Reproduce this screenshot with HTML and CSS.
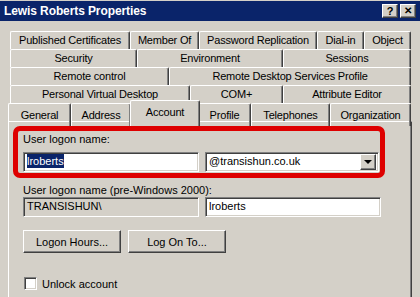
FILE: index.html
```html
<!DOCTYPE html>
<html lang="en">
<head>
    <meta charset="UTF-8">
    <title>Lewis Roberts Properties</title>
    <link rel="stylesheet" href="styles.css">
</head>
<body>
    <div class="window">
        <div class="titlebar">
            <span class="title">Lewis Roberts Properties</span>
            <div class="caption-buttons">
                <span class="cap-btn">?</span>
                <span class="cap-btn close">&#x2715;</span>
            </div>
        </div>

        <div class="tabs">
            <div class="tab-row row1">
                <span class="tab">Published Certificates</span>
                <span class="tab">Member Of</span>
                <span class="tab">Password Replication</span>
                <span class="tab">Dial-in</span>
                <span class="tab">Object</span>
            </div>
            <div class="tab-row row2">
                <span class="tab">Security</span>
                <span class="tab">Environment</span>
                <span class="tab">Sessions</span>
            </div>
            <div class="tab-row row3">
                <span class="tab">Remote control</span>
                <span class="tab">Remote Desktop Services Profile</span>
            </div>
            <div class="tab-row row4">
                <span class="tab">Personal Virtual Desktop</span>
                <span class="tab">COM+</span>
                <span class="tab">Attribute Editor</span>
            </div>
            <div class="tab-row row5">
                <span class="tab">General</span>
                <span class="tab">Address</span>
                <span class="tab active">Account</span>
                <span class="tab">Profile</span>
                <span class="tab">Telephones</span>
                <span class="tab">Organization</span>
            </div>
        </div>

        <div class="panel">
            <div class="highlight">
                <div class="label">User logon name:</div>
                <div class="field-row">
                    <div class="textbox wide"><span class="selected">lroberts</span></div>
                    <div class="textbox combo">
                        <span>@transishun.co.uk</span>
                        <span class="drop-btn"><span class="arrow"></span></span>
                    </div>
                </div>
            </div>

            <div class="fields">
                <div class="label">User logon name (pre-Windows 2000):</div>
                <div class="field-row">
                    <div class="textbox wide disabled">TRANSISHUN\</div>
                    <div class="textbox short">lroberts</div>
                </div>

                <div class="button-row">
                    <span class="button">Logon Hours...</span>
                    <span class="button">Log On To...</span>
                </div>

                <label class="check">
                    <span class="checkbox"></span>
                    Unlock account
                </label>
            </div>
        </div>
    </div>
</body>
</html>
```

FILE: styles.css
```css
body {
    margin: 0;
    background: #d4d0c8;
    font-family: "Liberation Sans", Arial, sans-serif;
    font-size: 11px;
    color: #000;
    overflow: hidden;
}
.window {
    width: 420px;
    height: 297px;
    padding-top: 1px;
    box-sizing: border-box;
}
.titlebar {
    height: 20px;
    background: #0a246a;
    display: flex;
    align-items: center;
    justify-content: space-between;
    padding: 0 4px 0 4px;
}
.title {
    color: #fff;
    font-weight: bold;
    font-size: 12px;
    letter-spacing: -0.1px;
}
.caption-buttons {
    display: flex;
    gap: 2px;
}
.cap-btn {
    width: 14px;
    height: 12px;
    background: #d4d0c8;
    border-top: 1px solid #fff;
    border-left: 1px solid #fff;
    border-right: 1px solid #404040;
    border-bottom: 1px solid #404040;
    box-shadow: inset -1px -1px 0 #808080;
    font-weight: bold;
    font-size: 11px;
    line-height: 12px;
    text-align: center;
}
.cap-btn.close {
    font-size: 10px;
}
.tabs {
    margin-top: 10px;
    padding-left: 10px;
    width: 401px;
}
.tab-row {
    display: grid;
    height: 18px;
}
.row1 { grid-template-columns: 120px 69px 118px 47px 47px; }
.row2 { grid-template-columns: 127px 146px 128px; }
.row3 { grid-template-columns: 159px 242px; }
.row4 { grid-template-columns: 180px 93px 128px; }
.row5 {
    margin-left: -2px;
    grid-template-columns: 63px 60px 67px 53px 79px 81px;
    position: relative;
}
.tab {
    display: flex;
    align-items: center;
    justify-content: center;
    border-top: 1px solid #fff;
    border-left: 1px solid #fff;
    border-right: 1px solid #404040;
    box-shadow: inset -1px 0 0 #808080;
    border-top-left-radius: 2px;
    border-top-right-radius: 2px;
    white-space: nowrap;
    letter-spacing: -0.2px;
    padding-bottom: 1px;
}
.tab.active {
    margin: -3px -2px 0 -1px;
    padding-bottom: 4px;
    background: #d4d0c8;
    position: relative;
    z-index: 1;
    height: 21px;
}
.panel {
    margin-left: 8px;
    width: 404px;
    height: 180px;
    border-top: 1px solid #fff;
    border-left: 1px solid #fff;
    border-right: 1px solid #404040;
    box-shadow: inset -1px 0 0 #808080;
    padding: 4px 0 0 4px;
    box-sizing: border-box;
}
.highlight {
    width: 372px;
    height: 52px;
    box-sizing: border-box;
    border: 5px solid #de0000;
    border-radius: 7px;
    padding: 2px 0 0 5px;
}
.label {
    height: 13px;
    line-height: 13px;
}
.field-row {
    display: flex;
    gap: 6px;
    margin-top: 6px;
}
.textbox {
    height: 20px;
    box-sizing: border-box;
    background: #fff;
    border-top: 1px solid #808080;
    border-left: 1px solid #808080;
    border-right: 1px solid #fff;
    border-bottom: 1px solid #fff;
    box-shadow: inset 1px 1px 0 #404040, inset -1px -1px 0 #d4d0c8;
    padding: 0 3px;
    line-height: 17px;
    white-space: nowrap;
}
.textbox.wide { width: 176px; }
.textbox.short { width: 176px; }
.textbox.combo {
    width: 174px;
    display: flex;
    justify-content: space-between;
    padding-right: 2px;
}
.textbox.disabled {
    background: #d4d0c8;
}
.selected {
    background: #0a246a;
    color: #fff;
    padding: 1px 0;
}
.drop-btn {
    margin-top: 1px;
    width: 14px;
    height: 14px;
    background: #d4d0c8;
    border-top: 1px solid #fff;
    border-left: 1px solid #fff;
    border-right: 1px solid #404040;
    border-bottom: 1px solid #404040;
    box-shadow: inset -1px -1px 0 #808080;
    display: flex;
    align-items: center;
    justify-content: center;
}
.arrow {
    width: 0;
    height: 0;
    border-left: 4px solid transparent;
    border-right: 4px solid transparent;
    border-top: 4px solid #000;
}
.fields {
    padding: 6px 0 0 10px;
}
.fields .field-row {
    margin-top: 0;
}
.button-row {
    display: flex;
    gap: 7px;
    margin-top: 13px;
}
.button {
    width: 98px;
    height: 23px;
    box-sizing: border-box;
    display: flex;
    align-items: center;
    justify-content: center;
    border-top: 1px solid #fff;
    border-left: 1px solid #fff;
    border-right: 1px solid #404040;
    border-bottom: 1px solid #404040;
    box-shadow: inset -1px -1px 0 #808080;
}
.check {
    display: flex;
    align-items: center;
    gap: 5px;
    margin-top: 24px;
    margin-left: 1px;
}
.checkbox {
    width: 13px;
    height: 13px;
    box-sizing: border-box;
    background: #fff;
    border-top: 1px solid #808080;
    border-left: 1px solid #808080;
    border-right: 1px solid #fff;
    border-bottom: 1px solid #fff;
    box-shadow: inset 1px 1px 0 #404040, inset -1px -1px 0 #d4d0c8;
}
```
